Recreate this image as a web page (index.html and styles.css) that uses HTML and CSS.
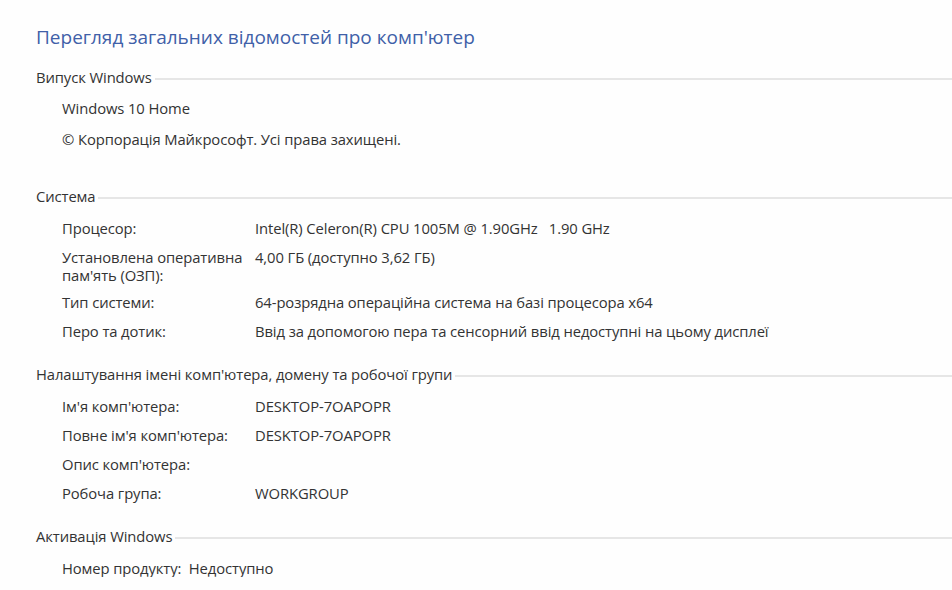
FILE: index.html
```html
<!DOCTYPE html>
<html lang="uk">
<head>
<meta charset="utf-8">
<link rel="stylesheet" href="styles.css">
</head>
<body>
<div class="page">
  <h1 class="title">Перегляд загальних відомостей про комп'ютер</h1>

  <section class="section first">
    <div class="head"><span class="head-label">Випуск Windows</span><span class="rule"></span></div>
    <div class="list list-wide">
      <div class="row single">Windows 10 Home</div>
      <div class="row single">© Корпорація Майкрософт. Усі права захищені.</div>
    </div>
  </section>

  <section class="section">
    <div class="head"><span class="head-label">Система</span><span class="rule"></span></div>
    <div class="list">
      <div class="row"><div class="label">Процесор:</div><div class="value">Intel(R) Celeron(R) CPU 1005M @ 1.90GHz&nbsp;&nbsp;&nbsp;1.90 GHz</div></div>
      <div class="row"><div class="label">Установлена оперативна пам'ять (ОЗП):</div><div class="value">4,00 ГБ (доступно 3,62 ГБ)</div></div>
      <div class="row tight"><div class="label">Тип системи:</div><div class="value">64-розрядна операційна система на базі процесора x64</div></div>
      <div class="row"><div class="label">Перо та дотик:</div><div class="value">Ввід за допомогою пера та сенсорний ввід недоступні на цьому дисплеї</div></div>
    </div>
  </section>

  <section class="section">
    <div class="head"><span class="head-label">Налаштування імені комп'ютера, домену та робочої групи</span><span class="rule"></span></div>
    <div class="list">
      <div class="row"><div class="label">Ім'я комп'ютера:</div><div class="value">DESKTOP-7OAPOPR</div></div>
      <div class="row"><div class="label">Повне ім'я комп'ютера:</div><div class="value">DESKTOP-7OAPOPR</div></div>
      <div class="row"><div class="label">Опис комп'ютера:</div><div class="value"></div></div>
      <div class="row"><div class="label">Робоча група:</div><div class="value">WORKGROUP</div></div>
    </div>
  </section>

  <section class="section">
    <div class="head"><span class="head-label">Активація Windows</span><span class="rule"></span></div>
    <div class="list">
      <div class="row single">Номер продукту:&nbsp;&nbsp;Недоступно</div>
    </div>
  </section>
</div>
</body>
</html>
```

FILE: styles.css
```css
html, body {
  margin: 0;
  padding: 0;
  background: #fefefe;
}

.page {
  padding: 24px 0 0 36px;
  font-family: "Open Sans", "Noto Sans", sans-serif;
  font-size: 14.8px;
  letter-spacing: -0.1px;
  color: #333333;
}

.title {
  margin: 0 0 18px 0;
  font-size: 19px;
  font-weight: normal;
  letter-spacing: 0;
  line-height: 26px;
  color: #4060a8;
}

.section {
  margin-top: 25px;
}

.section.first {
  margin-top: 0;
  margin-bottom: 39px;
}

.head {
  display: flex;
  align-items: center;
  line-height: 18px;
  height: 18px;
}

.head-label {
  white-space: nowrap;
  padding-right: 3px;
}

.rule {
  flex: 1;
  height: 2px;
  margin-top: 3px;
  background: #e6e6e6;
}

.list {
  display: flex;
  flex-direction: column;
  gap: 11px;
  margin-top: 14px;
  padding-left: 26px;
}

.list-wide {
  gap: 13px;
  margin-top: 13px;
}

.row {
  display: grid;
  grid-template-columns: 193px 1fr;
  line-height: 18px;
}

.row.single {
  display: block;
}

.row.tight {
  margin-top: -2px;
}

.label {
  padding-right: 4px;
}

.value {
  white-space: nowrap;
}
```
